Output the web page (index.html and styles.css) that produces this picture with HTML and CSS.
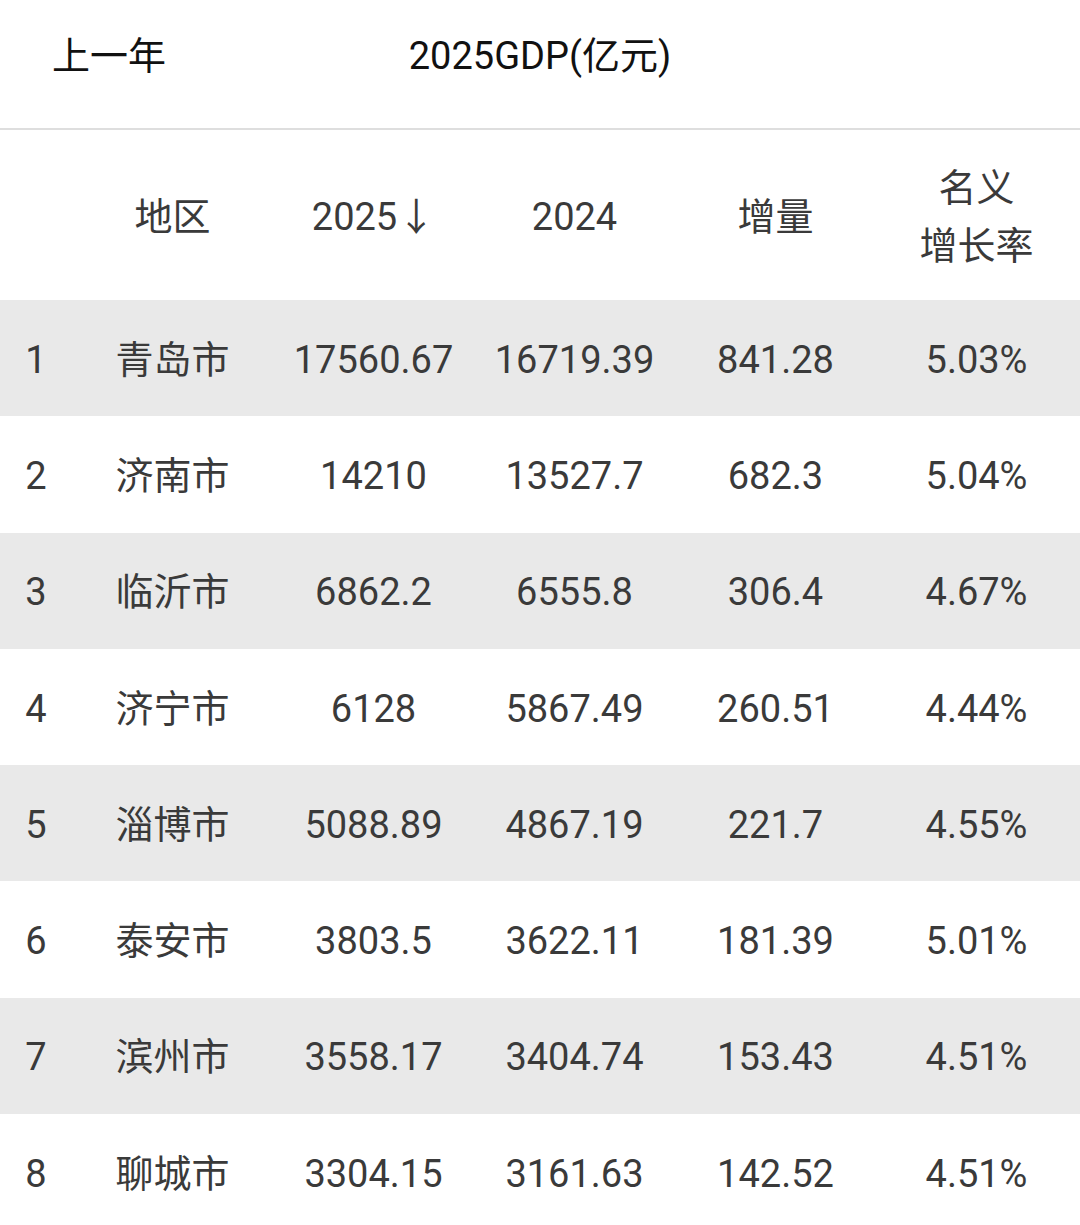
FILE: index.html
```html
<!DOCTYPE html>
<html lang="zh-CN">
<head>
<meta charset="utf-8">
<title>2025GDP</title>
<link rel="stylesheet" href="styles.css">
</head>
<body>
<div class="page">
  <div class="topbar">
    <div class="tab">上一年</div>
    <div class="title">2025GDP(亿元)</div>
    <div></div>
  </div>
  <div class="table">
    <div class="row head">
      <div class="cell"></div>
      <div class="cell">地区</div>
      <div class="cell">2025↓</div>
      <div class="cell">2024</div>
      <div class="cell">增量</div>
      <div class="cell two"><span>名义</span><span>增长率</span></div>
    </div>
    <div class="row odd"><div class="cell">1</div><div class="cell">青岛市</div><div class="cell">17560.67</div><div class="cell">16719.39</div><div class="cell">841.28</div><div class="cell">5.03%</div></div>
    <div class="row"><div class="cell">2</div><div class="cell">济南市</div><div class="cell">14210</div><div class="cell">13527.7</div><div class="cell">682.3</div><div class="cell">5.04%</div></div>
    <div class="row odd"><div class="cell">3</div><div class="cell">临沂市</div><div class="cell">6862.2</div><div class="cell">6555.8</div><div class="cell">306.4</div><div class="cell">4.67%</div></div>
    <div class="row"><div class="cell">4</div><div class="cell">济宁市</div><div class="cell">6128</div><div class="cell">5867.49</div><div class="cell">260.51</div><div class="cell">4.44%</div></div>
    <div class="row odd"><div class="cell">5</div><div class="cell">淄博市</div><div class="cell">5088.89</div><div class="cell">4867.19</div><div class="cell">221.7</div><div class="cell">4.55%</div></div>
    <div class="row"><div class="cell">6</div><div class="cell">泰安市</div><div class="cell">3803.5</div><div class="cell">3622.11</div><div class="cell">181.39</div><div class="cell">5.01%</div></div>
    <div class="row odd"><div class="cell">7</div><div class="cell">滨州市</div><div class="cell">3558.17</div><div class="cell">3404.74</div><div class="cell">153.43</div><div class="cell">4.51%</div></div>
    <div class="row"><div class="cell">8</div><div class="cell">聊城市</div><div class="cell">3304.15</div><div class="cell">3161.63</div><div class="cell">142.52</div><div class="cell">4.51%</div></div>
  </div>
</div>
</body>
</html>
```
FILE: styles.css
```css
html, body {
  margin: 0;
  padding: 0;
  background: #ffffff;
}
body {
  width: 1080px;
  height: 1225px;
  overflow: hidden;
  font-family: Roboto, "Noto Sans CJK SC", sans-serif;
  font-size: 38px;
  color: #3a3a3a;
}
.page {
  display: flex;
  flex-direction: column;
}
.topbar {
  height: 130px;
  display: grid;
  grid-template-columns: 1fr auto 1fr;
  align-items: start;
  padding-top: 31px;
  box-sizing: border-box;
  border-bottom: 2px solid #dedede;
  color: #111111;
}
.tab {
  padding-left: 52px;
  line-height: 50px;
}
.title {
  line-height: 50px;
}
.table {
  display: flex;
  flex-direction: column;
}
.row {
  display: grid;
  grid-template-columns: 72px repeat(5, 201px);
  height: 116.3px;
  align-items: center;
  flex-shrink: 0;
}
.row.head {
  height: 170px;
}
.row.odd {
  background: #e9e9e9;
}
.cell {
  text-align: center;
  white-space: nowrap;
  line-height: 44px;
  padding-top: 3px;
}
.cell.two {
  display: flex;
  flex-direction: column;
  align-items: center;
  gap: 14px;
}
```
